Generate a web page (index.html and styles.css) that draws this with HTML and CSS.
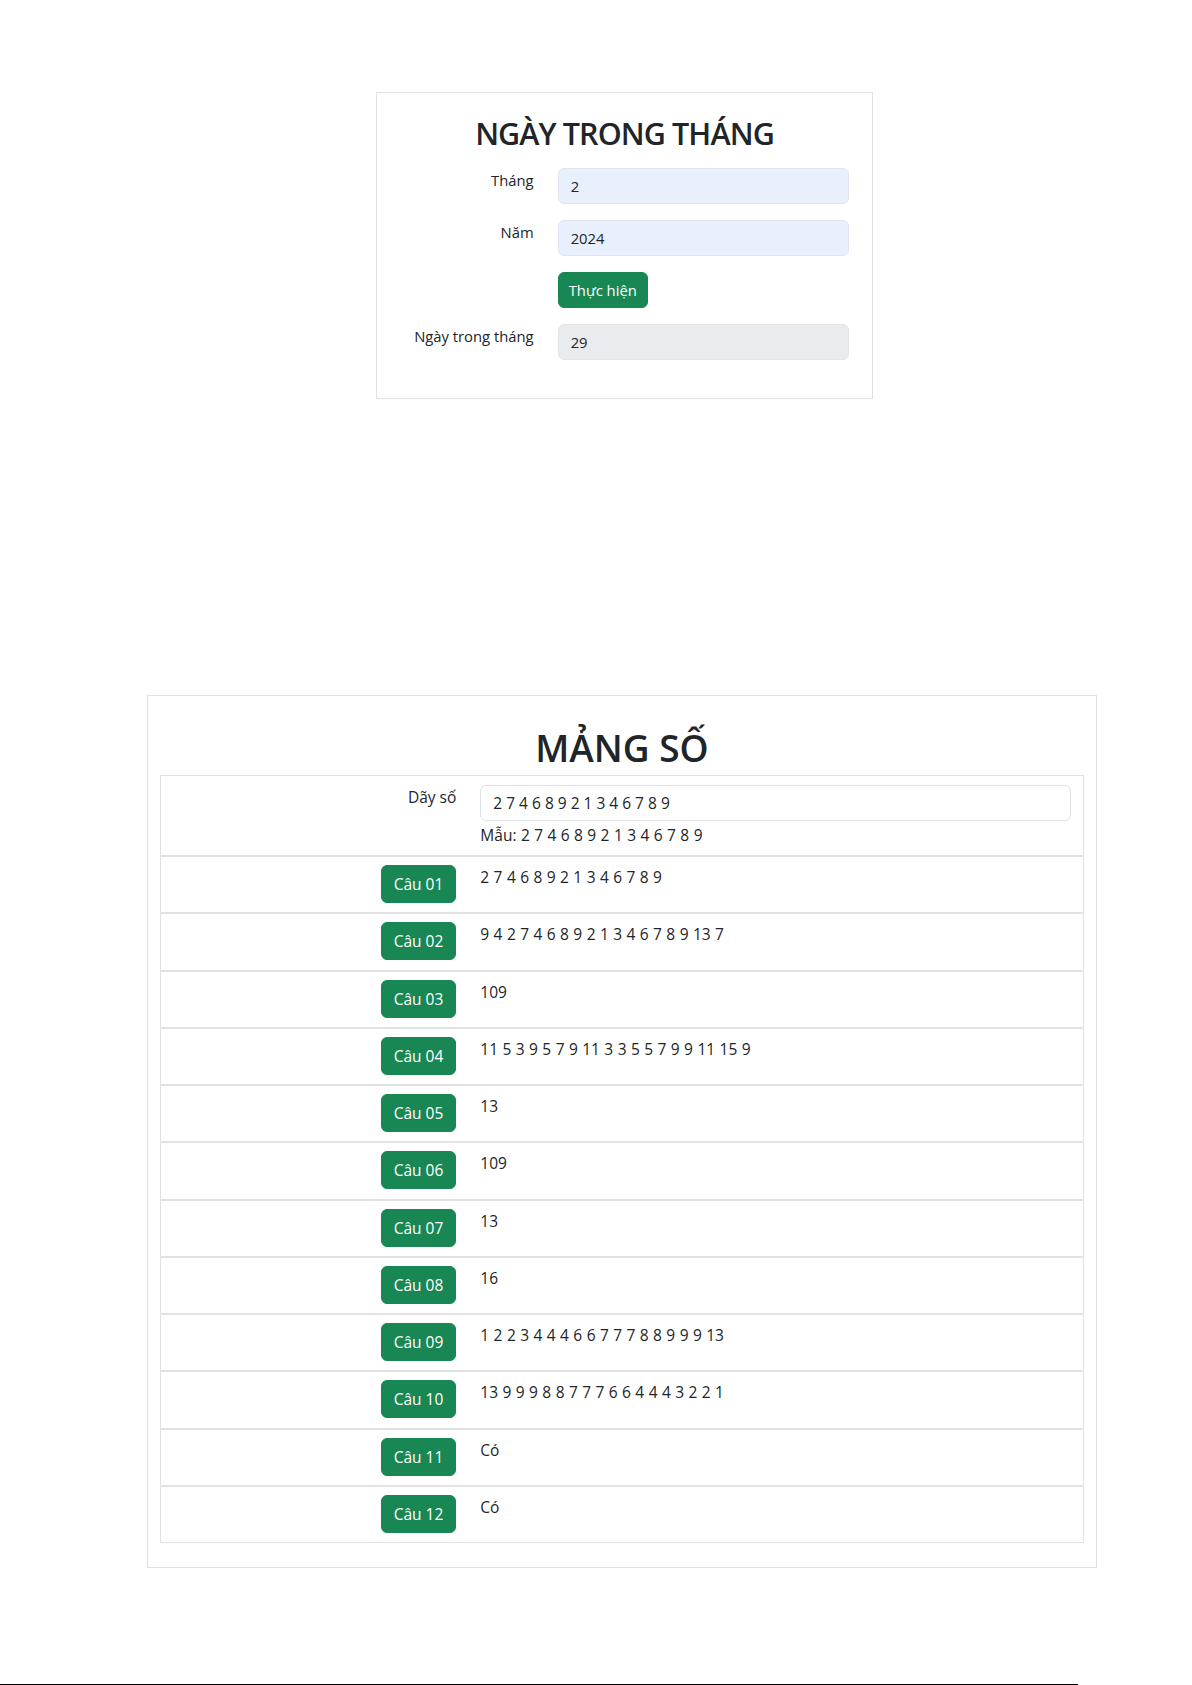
FILE: index.html
```html
<!DOCTYPE html>
<html lang="vi">
<head>
    <meta charset="UTF-8">
    <meta name="viewport" content="width=device-width, initial-scale=1.0">
    <title>Bài tập PHP</title>
    <link rel="stylesheet" href="styles.css">
</head>
<body>
    <div class="page">
        <!-- Bài 1: ngày trong tháng -->
        <form class="card card-month">
            <h2 class="title">NGÀY TRONG THÁNG</h2>
            <div class="form-row">
                <label class="form-label" for="thang">Tháng</label>
                <div class="form-field"><input class="form-control filled" id="thang" type="text" value="2"></div>
            </div>
            <div class="form-row">
                <label class="form-label" for="nam">Năm</label>
                <div class="form-field"><input class="form-control filled" id="nam" type="text" value="2024"></div>
            </div>
            <div class="form-row">
                <div class="form-label"></div>
                <div class="form-field"><button class="btn btn-small" type="button">Thực hiện</button></div>
            </div>
            <div class="form-row">
                <label class="form-label" for="songay">Ngày trong tháng</label>
                <div class="form-field"><input class="form-control" id="songay" type="text" value="29" disabled></div>
            </div>
        </form>

        <!-- Bài 2: mảng số -->
        <form class="card card-array">
            <h2 class="title title-lg">MẢNG SỐ</h2>
            <div class="table">
                <div class="table-row row-input">
                    <div class="cell-label"><label for="dayso">Dãy số</label></div>
                    <div class="cell-value">
                        <input class="form-control" id="dayso" type="text" value="2 7 4 6 8 9 2 1 3 4 6 7 8 9">
                        <div class="hint">Mẫu: 2 7 4 6 8 9 2 1 3 4 6 7 8 9</div>
                    </div>
                </div>
                <div class="table-row">
                    <div class="cell-label"><button class="btn" type="button">Câu 01</button></div>
                    <div class="cell-value">2 7 4 6 8 9 2 1 3 4 6 7 8 9</div>
                </div>
                <div class="table-row">
                    <div class="cell-label"><button class="btn" type="button">Câu 02</button></div>
                    <div class="cell-value">9 4 2 7 4 6 8 9 2 1 3 4 6 7 8 9 13 7</div>
                </div>
                <div class="table-row">
                    <div class="cell-label"><button class="btn" type="button">Câu 03</button></div>
                    <div class="cell-value">109</div>
                </div>
                <div class="table-row">
                    <div class="cell-label"><button class="btn" type="button">Câu 04</button></div>
                    <div class="cell-value">11 5 3 9 5 7 9 11 3 3 5 5 7 9 9 11 15 9</div>
                </div>
                <div class="table-row">
                    <div class="cell-label"><button class="btn" type="button">Câu 05</button></div>
                    <div class="cell-value">13</div>
                </div>
                <div class="table-row">
                    <div class="cell-label"><button class="btn" type="button">Câu 06</button></div>
                    <div class="cell-value">109</div>
                </div>
                <div class="table-row">
                    <div class="cell-label"><button class="btn" type="button">Câu 07</button></div>
                    <div class="cell-value">13</div>
                </div>
                <div class="table-row">
                    <div class="cell-label"><button class="btn" type="button">Câu 08</button></div>
                    <div class="cell-value">16</div>
                </div>
                <div class="table-row">
                    <div class="cell-label"><button class="btn" type="button">Câu 09</button></div>
                    <div class="cell-value">1 2 2 3 4 4 4 6 6 7 7 7 8 8 9 9 9 13</div>
                </div>
                <div class="table-row">
                    <div class="cell-label"><button class="btn" type="button">Câu 10</button></div>
                    <div class="cell-value">13 9 9 9 8 8 7 7 7 6 6 4 4 4 3 2 2 1</div>
                </div>
                <div class="table-row">
                    <div class="cell-label"><button class="btn" type="button">Câu 11</button></div>
                    <div class="cell-value">Có</div>
                </div>
                <div class="table-row">
                    <div class="cell-label"><button class="btn" type="button">Câu 12</button></div>
                    <div class="cell-value">Có</div>
                </div>
            </div>
        </form>

        <div class="page-rule"></div>
    </div>
</body>
</html>
```

FILE: styles.css
```css
* {
    box-sizing: border-box;
}

body {
    font-family: "Open Sans", "Noto Sans", sans-serif;
    margin: 0;
    padding: 0;
    background-color: #fff;
    color: #212529;
}

.page {
    padding-top: 92px;
}

.card {
    border: 1px solid #dee2e6;
    background-color: #fff;
}

.title {
    margin: 0;
    text-align: center;
    font-weight: 600;
    color: #212529;
}

/* ---- ngay trong thang ---- */

.card-month {
    width: 497px;
    margin-left: 376px;
    padding: 22px 11px 22px;
    font-size: 14.8px;
}

.card-month .title {
    font-size: 30.5px;
    line-height: 37px;
    letter-spacing: -0.9px;
    margin-bottom: 16px;
}

.form-row {
    display: grid;
    grid-template-columns: 4fr 8fr;
    margin-bottom: 16px;
}

.form-label {
    padding: 0 12px;
    text-align: right;
    line-height: 24px;
}

.form-field {
    padding: 0 12px;
}

.form-control {
    display: block;
    width: 100%;
    height: 36px;
    padding: 0 12px;
    font: inherit;
    line-height: 24px;
    color: #212529;
    background-color: #fff;
    border: 1px solid #dee2e6;
    border-radius: 6px;
}

.form-control.filled {
    background-color: #e8f0fe;
    border-color: #e1e6ee;
}

.form-control:disabled {
    background-color: #e9ecef;
    border-color: #e3e6e9;
    opacity: 1;
}

.btn {
    display: inline-block;
    padding: 6px 12px;
    font: inherit;
    line-height: 24px;
    color: #fff;
    background-color: #198754;
    border: 1px solid #198754;
    border-radius: 6px;
    cursor: pointer;
}

.btn-small {
    padding: 5px 10px;
}

/* ---- mang so ---- */

.card-array {
    width: 950px;
    margin-left: 147px;
    margin-top: 296px;
    padding: 30px 12px 24px;
    font-size: 15.5px;
}

.title-lg {
    font-size: 37px;
    line-height: 44px;
    margin-bottom: 5px;
}

.table {
    border: 1px solid #dee2e6;
}

.table-row {
    display: grid;
    grid-template-columns: 4fr 8fr;
    padding: 8px 0 9.25px;
    border-top: 2px solid #e2e2e2;
    line-height: 24px;
}

.table-row.row-input {
    border-top: none;
    padding: 9px 0 8px;
}

.cell-label {
    padding: 0 12px;
    text-align: right;
}

.cell-value {
    padding: 0 12px;
    word-spacing: 0.4px;
}

.hint {
    margin-top: 2px;
}

.page-rule {
    width: 1078px;
    height: 2px;
    margin-top: 116px;
    background-color: #000;
}
```
